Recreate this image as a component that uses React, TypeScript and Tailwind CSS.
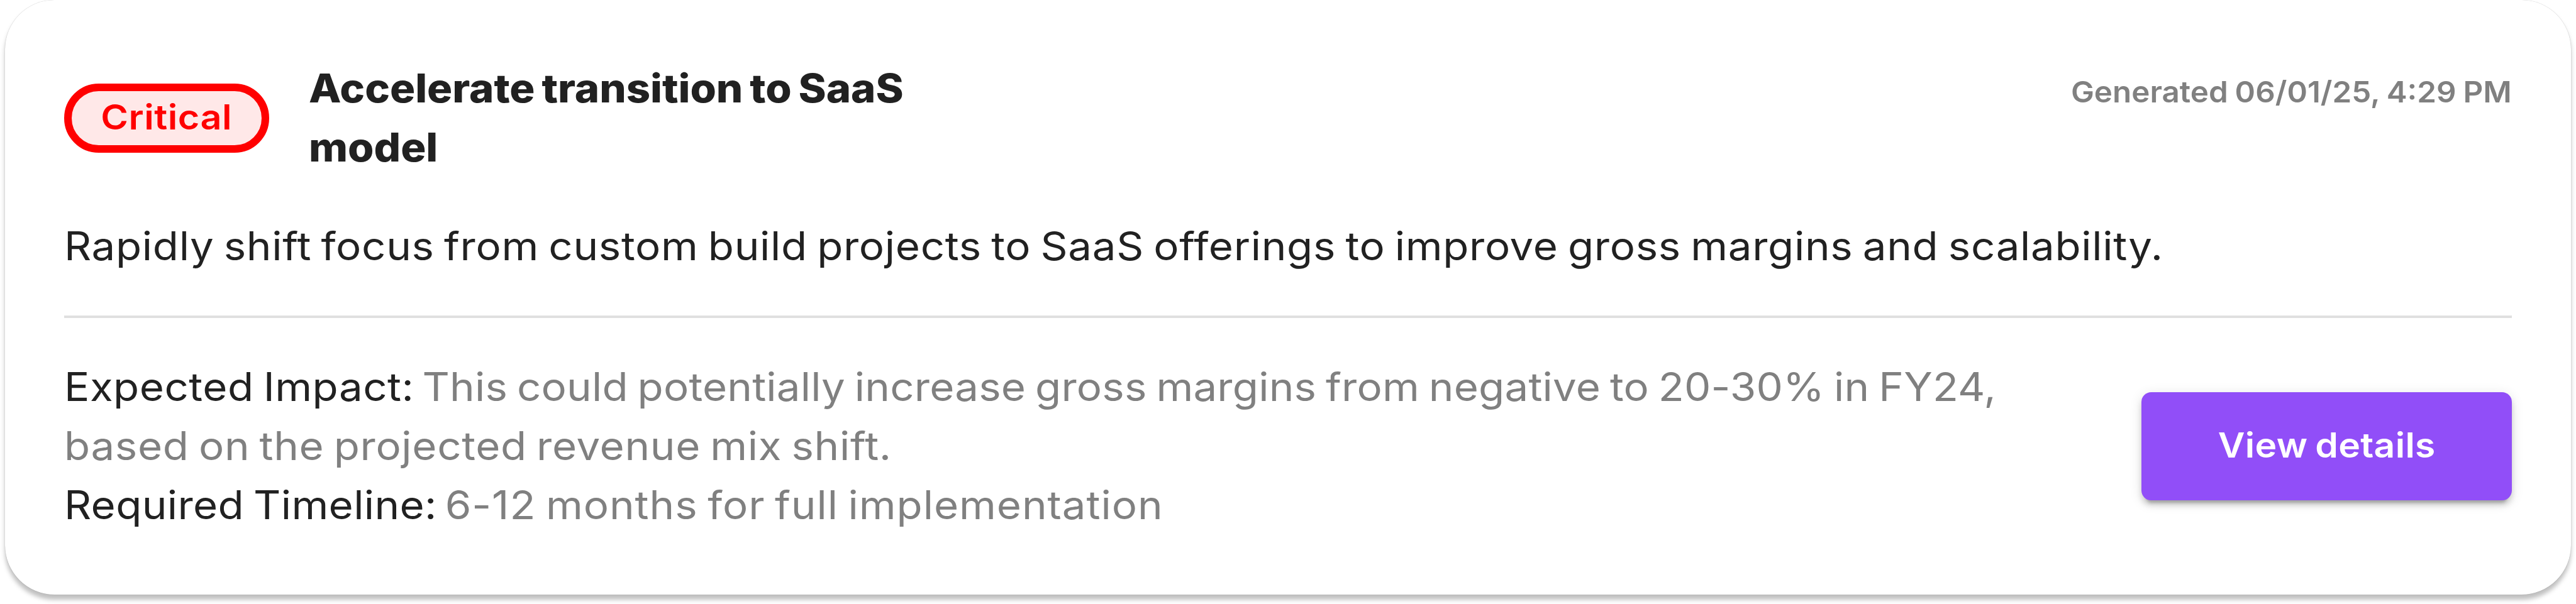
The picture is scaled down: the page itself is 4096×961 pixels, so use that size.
import type { ReactNode } from "react";

const RECOMMENDATION = {
  priority: "Critical",
  title: "Accelerate transition to SaaS model",
  generatedAt: "Generated 06/01/25, 4:29 PM",
  summary:
    "Rapidly shift focus from custom build projects to SaaS offerings to improve gross margins and scalability.",
};

function PriorityBadge({ children }: { children: ReactNode }) {
  return (
    <span className="mt-[2px] flex h-[110px] w-[326px] shrink-0 items-center justify-center rounded-full border-[12px] border-[#FF0000] bg-[#FFE8E8] pb-[3px] text-[54.93px] font-semibold leading-none tracking-[0.5px] text-[#FF0000]">
      <span className="scale-x-[1.08]">{children}</span>
    </span>
  );
}

function DetailsButton() {
  return (
    <button
      type="button"
      className="mt-[2px] flex h-[172.6px] w-[588.5px] shrink-0 items-center justify-center rounded-[15.7px] bg-[#914EF8] pb-[3px] text-[54.93px] font-semibold leading-none tracking-[0.3px] text-white [word-spacing:-3px] shadow-[0_12px_4px_-8px_rgba(0,0,0,0.2),0_8px_8px_0_rgba(0,0,0,0.14),0_4px_20px_0_rgba(0,0,0,0.12)]"
    >
      <span className="scale-x-[1.07]">View details</span>
    </button>
  );
}

export default function App() {
  return (
    <main className="h-[961px] w-[4096px] overflow-hidden bg-white px-[7.85px] font-['Inter',sans-serif] text-[#212121]">
      <article className="h-[945.5px] rounded-[78.5px] bg-white px-[94.2px] pt-[93px] shadow-[0_7.85px_7.85px_0_rgba(0,0,0,0.25),0_0_1px_0_rgba(0,0,0,0.3)]">
        <header className="flex items-center">
          <PriorityBadge>{RECOMMENDATION.priority}</PriorityBadge>
          <h2 className="ml-[63px] w-[1000px] origin-left scale-x-[1.066] text-[62.77px] font-extrabold leading-[94.17px] [word-spacing:-3.5px]">
            {RECOMMENDATION.title}
          </h2>
          <p className="ml-auto origin-right scale-x-[1.048] self-start text-[47.08px] font-semibold leading-[105px] text-[#808080] [word-spacing:-1.5px]">
            {RECOMMENDATION.generatedAt}
          </p>
        </header>

        <p className="mt-[62.8px] origin-left scale-x-[1.07] whitespace-nowrap text-[62.77px] leading-[94.17px] tracking-[0.66px] [word-spacing:-4px]">
          {RECOMMENDATION.summary}
        </p>

        <hr className="mt-[64px] border-t-4 border-[#E0E0E0]" />

        <div className="mt-[61.6px] flex items-center justify-between">
          <div className="origin-left scale-x-[1.07] text-[62.77px] leading-[94.17px] text-[#808080] [word-spacing:-4px]">
            <p>
              <span className="tracking-[0.5px] text-[#212121]">Expected Impact: </span>
              <span className="-ml-[2px] tracking-[0.2px]">
                This could potentially increase gross margins from negative to 20-30% in FY24,
              </span>
              <br />
              <span className="tracking-[0.64px]">based on the projected revenue mix shift.</span>
            </p>
            <p>
              <span className="tracking-[0.36px] text-[#212121]">Required Timeline: </span>
              <span className="-ml-[2px] tracking-[0.9px]">6-12 months for full implementation</span>
            </p>
          </div>
          <DetailsButton />
        </div>
      </article>
    </main>
  );
}
